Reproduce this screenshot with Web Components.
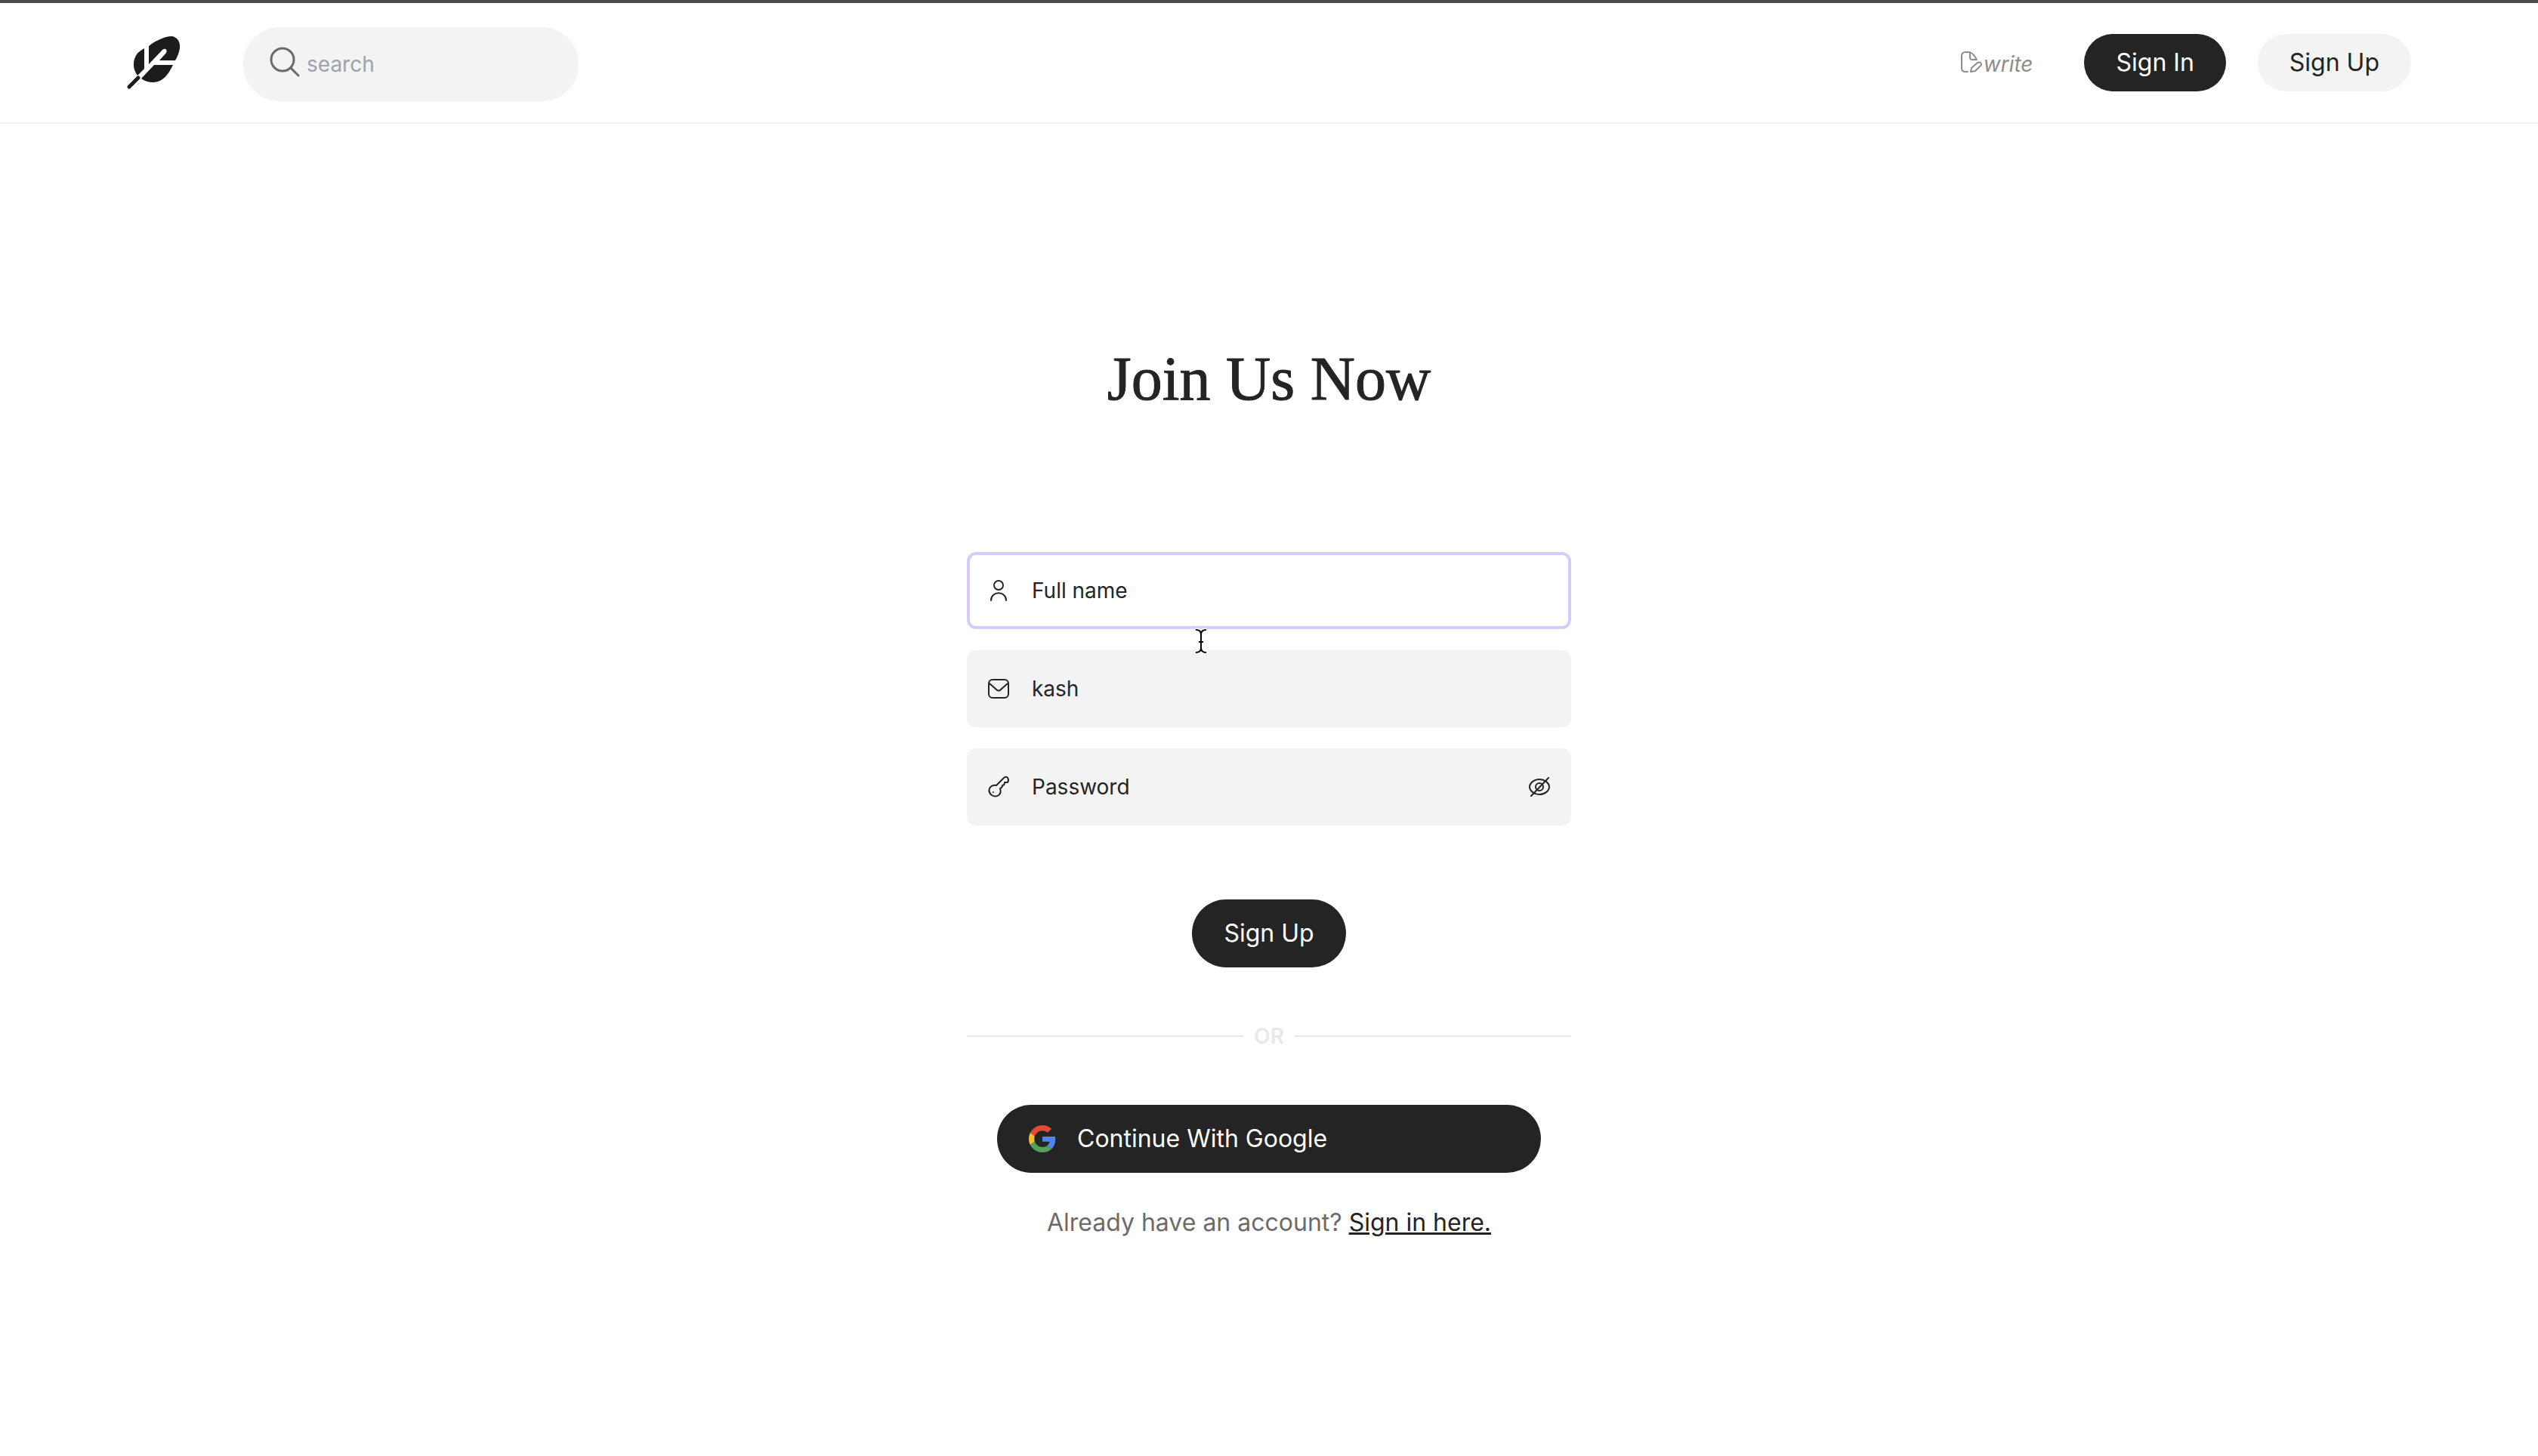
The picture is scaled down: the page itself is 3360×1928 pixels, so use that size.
<!DOCTYPE html>
<html lang="en">
<head>
<meta charset="utf-8">
<title>Join Us Now</title>
<style>
  body { margin: 0; background: #fff; color: #242424; font-family: Inter, "Liberation Sans", sans-serif; }
</style>
</head>
<body>
<site-page></site-page>

<script>
const define = (name, html) => {
  const template = document.createElement("template");
  template.innerHTML = html;
  customElements.define(name, class extends HTMLElement {
    constructor() {
      super();
      this.attachShadow({ mode: "open" }).append(template.content.cloneNode(true));
    }
  });
};

/* Icons: one element, picked by name */
const ICONS = {
  feather: `<svg viewBox="0 0 70 70"><path fill="#1c1c1c" d="M29 13C36 7 48 1 58 0C67 0 71 8 70 16C69 22 67 27 64 32H43L52 22C54 18 51 15 47 18L29 37ZM23 16V43L14 52C8 44 7 33 13 24C16 20 20 18 23 16ZM36 38H61C57 46 53 53 47 57C39 63 27 62 19 56Z"/><path stroke="#1c1c1c" stroke-width="5" stroke-linecap="round" d="M3 67L15 55"/></svg>`,
  search: `<svg viewBox="0 3 40 40" fill="none" stroke="#6b6b6b" stroke-width="3" stroke-linecap="round"><circle cx="16" cy="17" r="15"/><path d="M27 28L37 38"/></svg>`,
  write: `<svg viewBox="0 3 28 28" fill="none" stroke="#8c8c8c" stroke-width="2" stroke-linejoin="round" stroke-linecap="round"><path d="M9 27H6Q1 27 1 22V6Q1 1 6 1H10Q16 1 21 11M12 1V8Q12 11 15 11H21"/><path d="M13 27L14 22L22 15Q27 13 27 18L19 26Z"/></svg>`,
  user: `<svg viewBox="0 0 28 28" fill="none" stroke="#242424" stroke-width="2" stroke-linecap="round"><circle cx="14" cy="7" r="6"/><path d="M4 27C4 14 24 14 24 27"/></svg>`,
  mail: `<svg viewBox="0 0 28 28" fill="none" stroke="#242424" stroke-width="2"><rect x="1" y="2" width="26" height="24" rx="5"/><path d="M2 7L11 15Q14 18 17 15L26 7"/></svg>`,
  key: `<svg viewBox="0 0 28 28" fill="none" stroke="#242424" stroke-width="2" stroke-linejoin="round"><path d="M11 12L20 3Q24 -1 26 2Q28 5 26 8L22 8Q22 12 19 12Q19 15 16 16Q18 22 14 25Q10 28 5 25Q0 21 2 16Q5 11 11 12Z"/><circle cx="7" cy="21" r="1" fill="#242424" stroke="none"/></svg>`,
  eye: `<svg viewBox="0 0 28 28" fill="none" stroke="#242424" stroke-width="2" stroke-linecap="round"><path d="M1 14C1 9 7 4 14 4S27 9 27 14S21 24 14 24S1 19 1 14Z"/><circle cx="14" cy="14" r="5"/><path d="M3 26L26 2"/></svg>`,
  google: `<svg viewBox="0 0 48 48"><path fill="#e14b3c" d="M24 9.500c3.500 0 6.700 1.200 9.200 3.600l6.900-6.900C35.900 2.400 30.500 0 24 0 14.600 0 6.500 5.400 2.600 13.200l8 6.200C12.400 13.700 17.700 9.500 24 9.500z"/><path fill="#4f86ee" d="M47 24.600c0-1.600-.2-3.100-.4-4.600H24v9h12.900c-.6 3-2.200 5.500-4.700 7.200l7.700 6C44.400 38 47 31.800 47 24.600z"/><path fill="#f5b93a" d="M10.500 28.600c-.5-1.500-.8-3-.8-4.600s.3-3.100.8-4.600l-8-6.200C.9 16.500 0 20.100 0 24s.9 7.500 2.600 10.800z"/><path fill="#55a15b" d="M24 48c6.500 0 11.900-2.100 15.900-5.800l-7.700-6c-2.200 1.500-4.900 2.300-8.200 2.300-6.300 0-11.600-4.200-13.500-9.900l-8 6.200C6.500 42.600 14.600 48 24 48z"/></svg>`,
  caret: `<svg viewBox="0 0 16 34" fill="none"><path stroke="#fff" stroke-width="5" d="M1 2Q8 2 8 8V26Q8 32 1 32M15 2Q8 2 8 8V26Q8 32 15 32"/><path stroke="#000" stroke-width="2" d="M1 2Q8 2 8 8V26Q8 32 1 32M15 2Q8 2 8 8V26Q8 32 15 32M5 18H11"/></svg>`
};
customElements.define("ui-icon", class extends HTMLElement {
  connectedCallback() {
    if (this.shadowRoot) return;
    this.attachShadow({ mode: "open" }).innerHTML =
      `<style>:host{display:block;flex:none;width:28px;height:28px}svg{display:block;width:100%;height:100%;overflow:visible}</style>` + ICONS[this.getAttribute("name")];
  }
});

/* Pill button; variant="light" gives the grey one */
define("pill-button", `
<style>
  :host { display: block; }
  button { display: flex; align-items: center; gap: 28px; width: 100%; border: 0; border-radius: 999px;
    padding: var(--pill-pad, 18px) 42px; background: #242424; color: #fff; font: inherit; font-size: 32px; line-height: 40px; white-space: nowrap; }
  :host([variant="light"]) button { background: #f3f3f3; color: #242424; }
  :host([size="large"]) { --pill-pad: 25px; }
</style>
<button type="button"><slot></slot></button>`);

/* Text field with leading icon */
customElements.define("text-field", class extends HTMLElement {
  connectedCallback() {
    if (this.shadowRoot) return;
    const a = n => this.getAttribute(n) || "";
    this.attachShadow({ mode: "open" }).innerHTML = `
<style>
  :host { display: block; }
  div { display: flex; align-items: center; box-sizing: border-box; height: 102px; padding: 0 24px; gap: 30px;
    border: 4px solid #f3f3f3; border-radius: 12px; background: #f3f3f3; }
  :host([active]) div { border-color: #d8cbf8; background: #fff; }
  input { flex: 1; min-width: 0; border: 0; padding: 0; outline: 0; background: none; color: #242424; font: inherit; font-size: 28px; line-height: 40px; }
  input::placeholder { color: #242424; opacity: 1; }
</style>
<div><ui-icon name="${a("icon")}"></ui-icon>
<input type="${a("type")}" aria-label="${a("label")}" placeholder="${a("placeholder")}" value="${a("value")}"><slot></slot></div>`;
  }
});

define("site-header", `
<style>
  :host { display: block; border-top: 4px solid #4a4a4a; border-bottom: 2px solid #f3f3f3; }
  nav { display: flex; align-items: center; height: 158px; box-sizing: border-box; padding: 0 5vw; }
  .logo { margin-right: 84px; }
  .logo ui-icon { width: 70px; height: 70px; }
  label { display: flex; align-items: center; gap: 8px; box-sizing: border-box; width: 444px; height: 98px; margin-top: 4px; padding: 0 36px; border-radius: 49px; background: #f3f3f3; }
  label ui-icon { width: 40px; height: 40px; }
  input { flex: 1; min-width: 0; border: 0; padding: 0; outline: 0; background: none; font: inherit; font-size: 28px; line-height: 40px; }
  input::placeholder { color: #9ca3af; opacity: 1; }
  .right { display: flex; align-items: center; gap: 42px; margin-left: auto; }
  .write { display: flex; align-items: center; gap: 2px; margin: 4px 26px 0 0; color: #8c8c8c; font-size: 28px; line-height: 40px; font-style: italic; text-decoration: none; }
</style>
<nav>
  <a class="logo" href="#" aria-label="Home"><ui-icon name="feather"></ui-icon></a>
  <label><ui-icon name="search"></ui-icon><input type="text" aria-label="search" placeholder="search"></label>
  <div class="right">
    <a class="write" href="#"><ui-icon name="write"></ui-icon><span>write</span></a>
    <pill-button>Sign In</pill-button>
    <pill-button variant="light">Sign Up</pill-button>
  </div>
</nav>`);

define("or-divider", `
<style>
  :host { display: flex; align-items: center; gap: 14px; color: #e9e9e9; font-size: 28px; line-height: 40px; font-weight: 600; }
  i { flex: 1; height: 2px; background: #e9e9e9; }
</style>
<i></i><span><slot></slot></span><i></i>`);

define("signup-form", `
<style>
  :host { display: block; }
  form { display: flex; flex-direction: column; align-items: center; width: 800px; max-width: 100%; margin: 0 auto; }
  h1 { margin: 0; color: #242424; font: 500 82px/100px "Liberation Serif", serif; -webkit-text-stroke: 1px #242424; }
  .fields { display: flex; flex-direction: column; gap: 28px; width: 100%; margin: 179px 0 98px; }
  .first { position: relative; }
  .pointer { position: absolute; left: 302px; top: 101px; z-index: 1; width: 16px; height: 34px; }
  .eye { border: 0; padding: 0; background: none; }
  or-divider { width: 100%; margin: 71px 0; }
  .google { width: 720px; max-width: 100%; }
  .google ui-icon { width: 36px; height: 36px; }
  p { margin: 46px 0 0; color: #6b6b6b; font-size: 32px; line-height: 40px; }
  a { color: #242424; }
</style>
<form>
  <h1>Join Us Now</h1>
  <div class="fields">
    <div class="first"><text-field active icon="user" type="text" label="Full name" placeholder="Full name"></text-field><ui-icon class="pointer" name="caret"></ui-icon></div>
    <text-field icon="mail" type="text" label="Email" value="kash"></text-field>
    <text-field icon="key" type="password" label="Password" placeholder="Password"><button class="eye" type="button" aria-label="Show password"><ui-icon name="eye"></ui-icon></button></text-field>
  </div>
  <pill-button size="large">Sign Up</pill-button>
  <or-divider>OR</or-divider>
  <pill-button class="google" size="large"><ui-icon name="google"></ui-icon>Continue With Google</pill-button>
  <p>Already have an account? <a href="#">Sign in here.</a></p>
</form>`);

define("site-page", `
<style>
  :host { display: block; }
  main { padding: 288px 5vw 0; }
</style>
<site-header></site-header>
<main><signup-form></signup-form></main>`);
</script>
</body>
</html>
